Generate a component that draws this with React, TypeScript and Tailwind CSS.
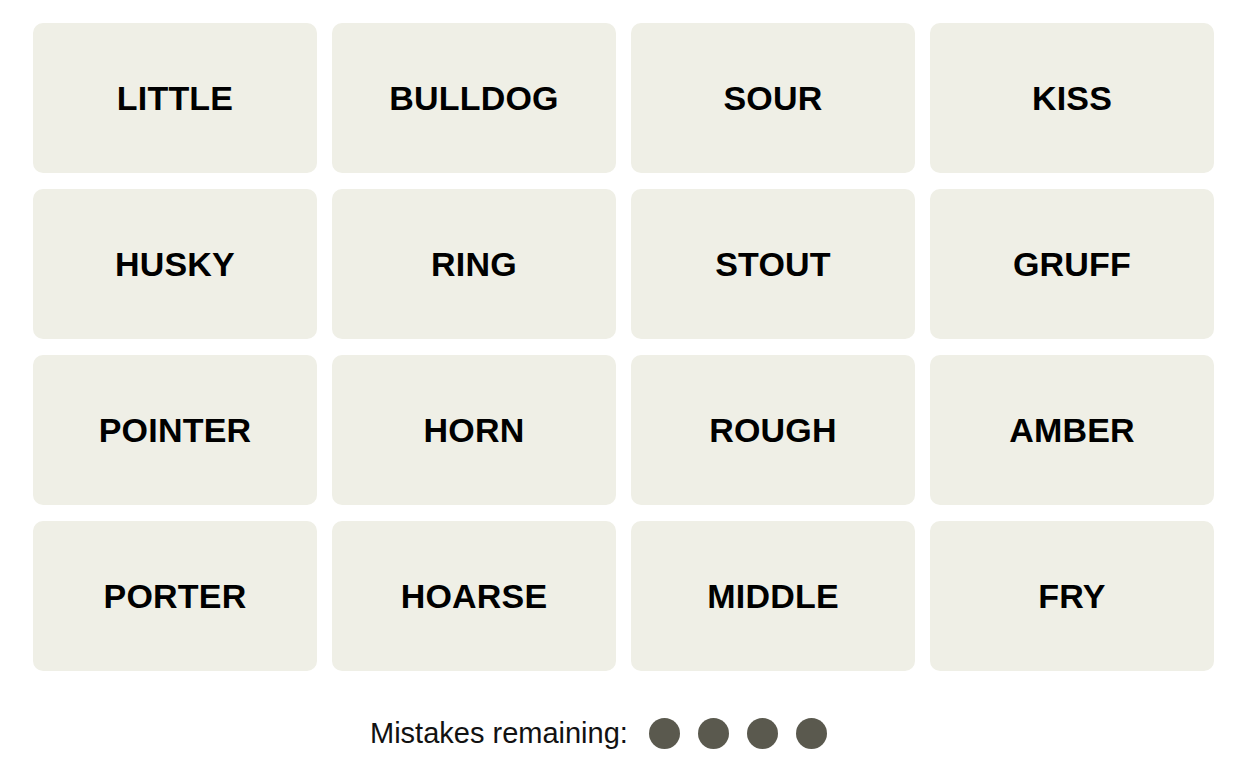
import React from 'react';

const words: string[] = [
  'LITTLE', 'BULLDOG', 'SOUR', 'KISS',
  'HUSKY', 'RING', 'STOUT', 'GRUFF',
  'POINTER', 'HORN', 'ROUGH', 'AMBER',
  'PORTER', 'HOARSE', 'MIDDLE', 'FRY',
];

const App: React.FC = () => {
  const mistakesLeft = 4;

  return (
    <div className="min-h-screen bg-white font-['Liberation_Sans',Arial,sans-serif] text-black">
      {/* 단어 타일 */}
      <div className="ml-[33px] pt-[23px] w-[1181px] grid grid-cols-4 gap-x-[15px] gap-y-[16px]">
        {words.map((word) => (
          <div
            key={word}
            className="h-[150px] rounded-[10px] bg-[#efefe6] flex items-center justify-center"
          >
            <span className="text-[34px] font-bold leading-none tracking-[0.2px]">{word}</span>
          </div>
        ))}
      </div>

      {/* 남은 실수 */}
      <div className="ml-[370px] mt-[45px] flex items-center h-[34px]">
        <span className="text-[29px] leading-[34px] text-[#121212]">Mistakes remaining:</span>
        <div className="flex items-center gap-[18px] ml-[21px]">
          {Array.from({ length: mistakesLeft }).map((_, i) => (
            <span key={i} className="w-[31px] h-[31px] rounded-full bg-[#5a594e]" />
          ))}
        </div>
      </div>
    </div>
  );
};

export default App;
